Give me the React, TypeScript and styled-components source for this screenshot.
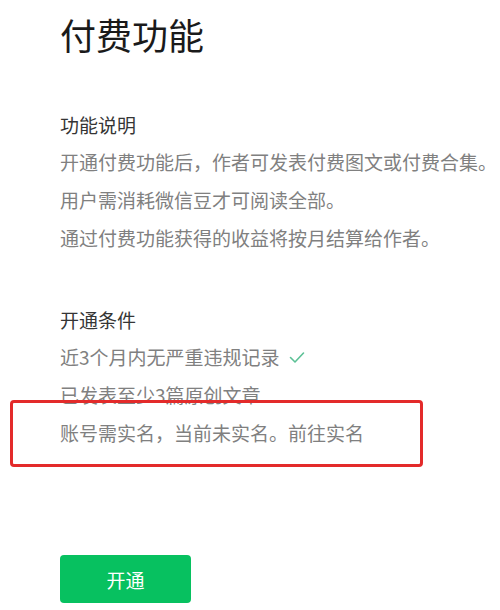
import React from "react";
import styled, { createGlobalStyle } from "styled-components";

const GlobalStyle = createGlobalStyle`
  html, body {
    margin: 0;
    padding: 0;
    background: #ffffff;
  }
  body {
    font-family: "Noto Sans CJK SC", "Noto Sans", sans-serif;
  }
`;

const Page = styled.div`
  width: 500px;
  height: 610px;
  padding-left: 60px;
  box-sizing: border-box;
  overflow: hidden;
`;

const Title = styled.h1`
  margin: 9px 0 0;
  font-size: 36px;
  font-weight: 400;
  line-height: 50px;
  color: #1a1a1a;
`;

const Section = styled.section<{ $gap: number }>`
  margin-top: ${(p) => p.$gap}px;
`;

const SectionHeading = styled.h2`
  margin: 0;
  font-size: 19px;
  font-weight: 400;
  line-height: 36px;
  color: #353535;
`;

const Line = styled.p`
  margin: 0;
  font-size: 19px;
  line-height: 38px;
  color: #808080;
  white-space: nowrap;
  display: flex;
  align-items: center;
`;

const CheckMark = styled.svg`
  margin-left: 9px;
  width: 16px;
  height: 13px;
  flex: none;
`;

const Highlighted = styled.div`
  position: relative;
`;

const HighlightBox = styled.div`
  position: absolute;
  left: -50px;
  top: -14px;
  width: 413px;
  height: 67px;
  box-sizing: border-box;
  border: 3px solid #e32a2a;
  border-radius: 4px;
  pointer-events: none;
`;

const OpenButton = styled.button`
  margin-top: 103px;
  width: 131px;
  height: 48px;
  border: none;
  border-radius: 4px;
  background: #07c160;
  color: #ffffff;
  font-family: inherit;
  font-size: 19px;
  cursor: pointer;
`;

function Check() {
  return (
    <CheckMark viewBox="0 0 16 13">
      <polyline
        points="1.5,6.5 6,11 14.5,2"
        fill="none"
        stroke="#5cc196"
        strokeWidth="1.6"
        strokeLinecap="round"
        strokeLinejoin="round"
      />
    </CheckMark>
  );
}

export default function App() {
  return (
    <>
      <GlobalStyle />
      <Page>
        <Title>付费功能</Title>

        <Section $gap={48}>
          <SectionHeading>功能说明</SectionHeading>
          <Line>开通付费功能后，作者可发表付费图文或付费合集。</Line>
          <Line>用户需消耗微信豆才可阅读全部。</Line>
          <Line>通过付费功能获得的收益将按月结算给作者。</Line>
        </Section>

        <Section $gap={45}>
          <SectionHeading>开通条件</SectionHeading>
          <Line>
            近3个月内无严重违规记录
            <Check />
          </Line>
          <Line>已发表至少3篇原创文章</Line>
          <Highlighted>
            <Line>账号需实名，当前未实名。前往实名</Line>
            <HighlightBox />
          </Highlighted>
        </Section>

        <OpenButton>开通</OpenButton>
      </Page>
    </>
  );
}
